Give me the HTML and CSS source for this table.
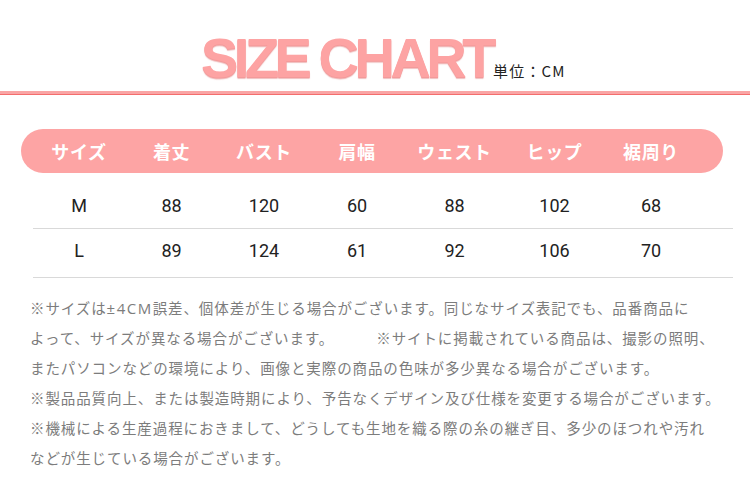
FILE: index.html
```html
<!DOCTYPE html>
<html lang="ja">
<head>
<meta charset="utf-8">
<link rel="stylesheet" href="styles.css">
</head>
<body>
<div class="page">
  <header class="head">
    <h1 class="title">SIZE CHART</h1>
    <span class="unit">単位：CM</span>
  </header>
  <div class="rule"></div>
  <div class="table">
    <div class="thead grid">
      <span>サイズ</span><span>着丈</span><span>バスト</span><span>肩幅</span><span>ウェスト</span><span>ヒップ</span><span>裾周り</span>
    </div>
    <div class="row row1 grid">
      <span>M</span><span>88</span><span>120</span><span>60</span><span>88</span><span>102</span><span>68</span>
    </div>
    <div class="row row2 grid">
      <span>L</span><span>89</span><span>124</span><span>61</span><span>92</span><span>106</span><span>70</span>
    </div>
  </div>
  <div class="notes">
    <p>※サイズは<span class="latin">±4CM</span>誤差、個体差が生じる場合がございます。同じなサイズ表記でも、品番商品に</p>
    <p>よって、サイズが異なる場合がございます。<span class="gap"></span>※サイトに掲載されている商品は、撮影の照明、</p>
    <p>またパソコンなどの環境により、画像と実際の商品の色味が多少異なる場合がございます。</p>
    <p>※製品品質向上、または製造時期により、予告なくデザイン及び仕様を変更する場合がございます。</p>
    <p>※機械による生産過程におきまして、どうしても生地を織る際の糸の継ぎ目、多少のほつれや汚れ</p>
    <p>などが生じている場合がございます。</p>
  </div>
</div>
</body>
</html>
```

FILE: styles.css
```css
* { box-sizing: border-box; margin: 0; padding: 0; }
html, body { background: #fff; }
body { margin: 0; width: 750px; height: 503px; overflow: hidden; }
.page { width: 750px; }

.head {
  display: flex;
  align-items: baseline;
  padding-top: 30px;
  padding-left: 201px;
  height: 91px;
}
.title {
  font-family: "Liberation Sans", Arial, sans-serif;
  font-weight: 700;
  font-size: 56px;
  line-height: 56px;
  letter-spacing: -4.5px;
  color: #fda3a3;
  text-shadow: 0 1px 0 #f39a9a, 0 2px 1px rgba(220, 110, 110, 0.45);
}
.unit {
  font-family: "Noto Sans CJK JP", sans-serif;
  font-size: 15px;
  color: #222;
  margin-left: 1px;
  letter-spacing: 1.2px;
}

.rule {
  height: 4px;
  background: #f9a5a5;
  border-bottom: 1px solid #f46d6d;
}

.table {
  margin: 34px 27px 0 21px;
}
.grid {
  display: grid;
  grid-template-columns: 92px 93px 92px 94px 101px 99px 94px;
  justify-items: center;
  align-items: center;
}
.thead {
  height: 44px;
  border-radius: 22px;
  background: #fda4a4;
  padding-left: 12px;
  font-family: "Noto Sans CJK JP", sans-serif;
  font-weight: 700;
  font-size: 18px;
  letter-spacing: 0.6px;
  color: #fff;
}
.row {
  margin-left: 12px;
  margin-right: -10px;
  border-bottom: 1px solid #d9d9d9;
  font-family: Roboto, "Open Sans", sans-serif;
  font-size: 18px;
  line-height: 22px;
  color: #222;
}
.row1 { padding: 22px 0 11px; }
.row2 { padding: 11px 0 15px; }

.notes {
  margin-top: 15px;
  padding-left: 30px;
  font-family: "Noto Sans CJK JP", sans-serif;
  font-size: 14.5px;
  line-height: 30px;
  letter-spacing: 0.9px;
  color: #7c7c7c;
}
.notes p { white-space: nowrap; }
.latin { font-family: "Open Sans", sans-serif; font-size: 15px; letter-spacing: 1.5px; }
.gap { display: inline-block; width: 42px; }
```
